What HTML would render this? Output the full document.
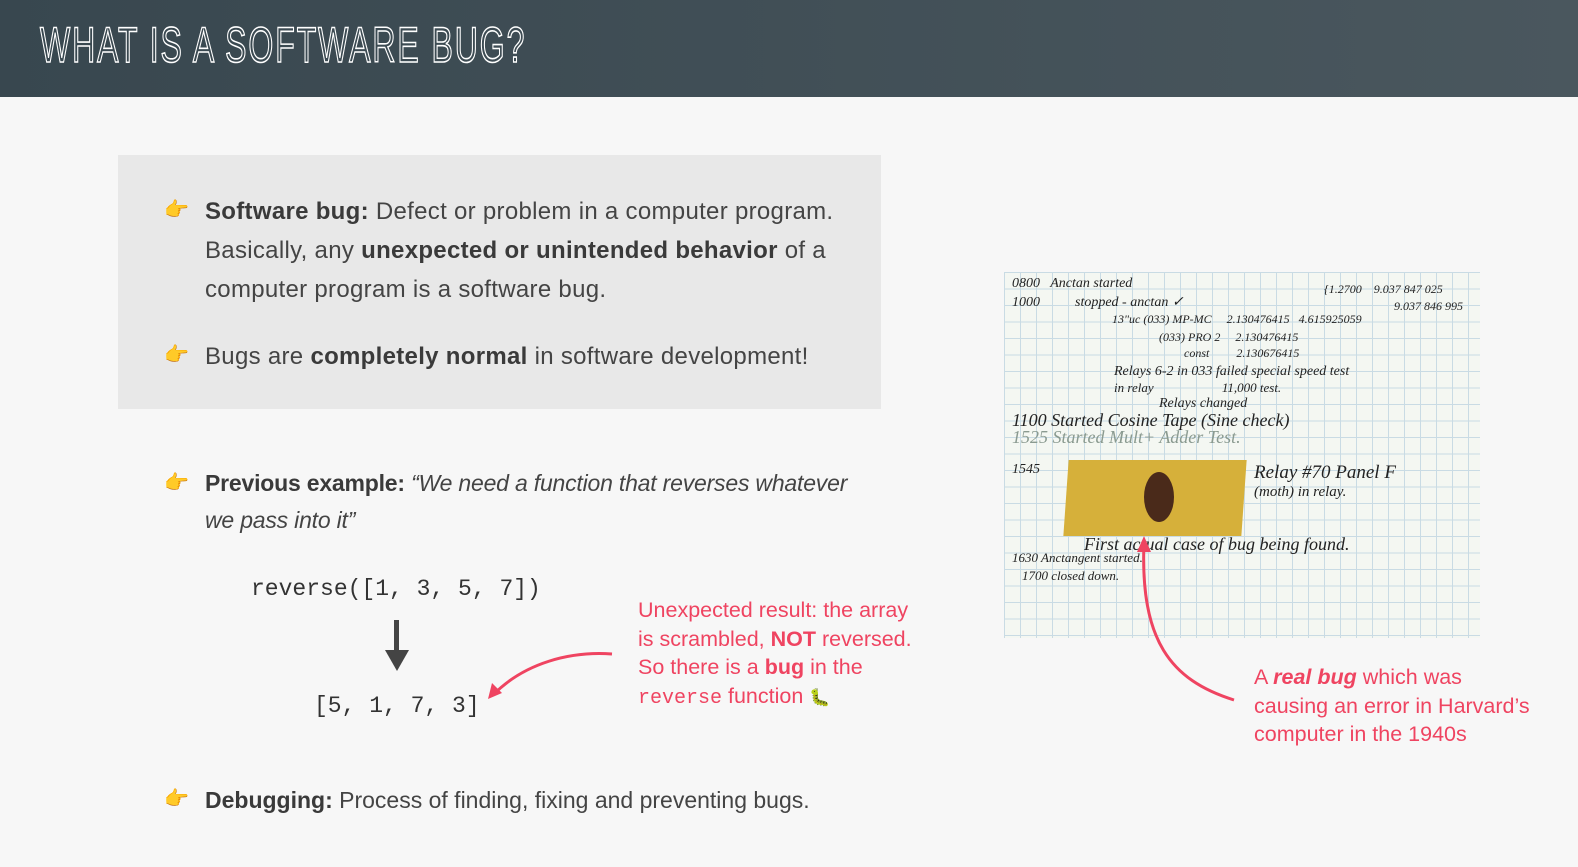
<!DOCTYPE html>
<html><head><meta charset="utf-8"><style>
*{margin:0;padding:0;box-sizing:border-box}
body{width:1578px;height:867px;background:#f7f7f7;position:relative;overflow:hidden;font-family:"Liberation Sans",sans-serif;color:#444}
.hdr{position:absolute;left:0;top:0;width:1578px;height:97px;background:linear-gradient(90deg,#38474f,#4a575e)}
.hdr h1{position:absolute;left:40px;top:16px;font-family:"Liberation Sans Narrow","Liberation Sans",sans-serif;font-weight:400;font-size:50px;letter-spacing:3px;color:transparent;-webkit-text-stroke:1.6px #fff;transform:scaleX(.64);transform-origin:left;white-space:nowrap}
.box{position:absolute;left:118px;top:155px;width:763px;height:254px;background:#e8e8e8}
.p{position:absolute;font-size:24px;letter-spacing:0.3px;line-height:39px;color:#444}
.p b{color:#3a3a3a}
.hand{position:absolute;font-size:20px;font-family:"Noto Color Emoji","DejaVu Sans",sans-serif}
.code{position:absolute;font-family:"Liberation Mono",monospace;font-size:23px;color:#333}
.red{position:absolute;color:#ef4461;font-size:21.5px;line-height:28.5px;white-space:nowrap}
.red code{font-family:"Liberation Mono",monospace;font-size:20px}
.photo{position:absolute;left:1004px;top:272px;width:476px;height:366px;background-color:#f4f7f2;background-image:linear-gradient(#c9dbe4 1px,transparent 1px),linear-gradient(90deg,#c9dbe4 1px,transparent 1px);background-size:16px 16.5px;overflow:hidden}
.hw{position:absolute;font-family:"Liberation Serif",serif;font-style:italic;color:#222;white-space:nowrap}
</style></head><body>
<div class="hdr"><h1>WHAT IS A SOFTWARE BUG?</h1></div>
<div class="box"></div>
<div class="hand" style="left:164px;top:197px">👉</div>
<div class="p" style="left:205px;top:192px;white-space:nowrap"><b>Software bug:</b> Defect or problem in a computer program.<br>Basically, any <b>unexpected or unintended behavior</b> of a<br>computer program is a software bug.</div>
<div class="hand" style="left:164px;top:342px">👉</div>
<div class="p" style="left:205px;top:337px;white-space:nowrap">Bugs are <b>completely normal</b> in software development!</div>
<div class="hand" style="left:164px;top:470px">👉</div>
<div class="p" style="left:205px;top:465px;white-space:nowrap;line-height:37px;font-size:23px;letter-spacing:-0.2px"><b>Previous example:</b> <i>“We need a function that reverses whatever<br>we pass into it”</i></div>
<div class="code" style="left:251px;top:576px">reverse([1, 3, 5, 7])</div>
<svg style="position:absolute;left:383px;top:620px" width="28" height="52"><rect x="11" y="0" width="5" height="32" fill="#444"/><path d="M2 30 L26 30 L14 51 Z" fill="#444"/></svg>
<div class="code" style="left:314px;top:693px">[5, 1, 7, 3]</div>
<svg style="position:absolute;left:480px;top:645px" width="140" height="60"><path d="M132 9 C90 6 45 18 14 49" fill="none" stroke="#ef4461" stroke-width="3"/><path d="M8 54 L12 38 L22 48 Z" fill="#ef4461"/></svg>
<div class="red" style="left:638px;top:596px">Unexpected result: the array<br>is scrambled, <b>NOT</b> reversed.<br>So there is a <b>bug</b> in the<br><code>reverse</code> function <span style="font-family:'Noto Color Emoji',sans-serif;font-size:17px">🐛</span></div>
<div class="photo">
<div class="hw" style="left:8px;top:4px;font-size:14px">0800 &nbsp; Anctan started</div>
<div class="hw" style="left:8px;top:22px;font-size:14px">1000 &nbsp;&nbsp;&nbsp;&nbsp;&nbsp;&nbsp;&nbsp;&nbsp; stopped - anctan ✓</div>
<div class="hw" style="left:320px;top:10px;font-size:12px">{1.2700 &nbsp;&nbsp; 9.037 847 025</div>
<div class="hw" style="left:390px;top:27px;font-size:12px">9.037 846 995</div>
<div class="hw" style="left:108px;top:40px;font-size:12px">13"uc (033) MP-MC &nbsp;&nbsp;&nbsp; 2.130476415 &nbsp; 4.615925059</div>
<div class="hw" style="left:155px;top:58px;font-size:12px">(033) PRO 2 &nbsp;&nbsp;&nbsp; 2.130476415</div>
<div class="hw" style="left:180px;top:74px;font-size:12px">const &nbsp;&nbsp;&nbsp;&nbsp;&nbsp;&nbsp;&nbsp; 2.130676415</div>
<div class="hw" style="left:110px;top:92px;font-size:14px">Relays 6-2 in 033 failed special speed test</div>
<div class="hw" style="left:110px;top:108px;font-size:13px">in relay &nbsp;&nbsp;&nbsp;&nbsp;&nbsp;&nbsp;&nbsp;&nbsp;&nbsp;&nbsp;&nbsp;&nbsp;&nbsp;&nbsp;&nbsp;&nbsp;&nbsp;&nbsp;&nbsp; 11,000 test.</div>
<div class="hw" style="left:155px;top:124px;font-size:14px">Relays changed</div>
<div class="hw" style="left:8px;top:138px;font-size:18px">1100 Started Cosine Tape (Sine check)</div>
<div class="hw" style="left:8px;top:155px;font-size:18px;color:#8a9a90">1525 Started Mult+ Adder Test.</div>
<div class="hw" style="left:8px;top:190px;font-size:14px">1545</div>
<div style="position:absolute;left:62px;top:188px;width:178px;height:76px;background:#d6b03a;transform:skewX(-4deg)"></div>
<div style="position:absolute;left:140px;top:200px;width:30px;height:50px;background:#4a2a1a;border-radius:50%"></div>
<div class="hw" style="left:250px;top:190px;font-size:19px">Relay #70 Panel F</div>
<div class="hw" style="left:250px;top:212px;font-size:15px">(moth) in relay.</div>
<div class="hw" style="left:80px;top:262px;font-size:18px">First actual case of bug being found.</div>
<div class="hw" style="left:8px;top:278px;font-size:13px">1630 Anctangent started.</div>
<div class="hw" style="left:18px;top:296px;font-size:13px">1700 closed down.</div>
</div>
<svg style="position:absolute;left:1130px;top:530px" width="110" height="180"><path d="M104 170 C40 150 10 110 14 12" fill="none" stroke="#ef4461" stroke-width="3"/><path d="M14 6 L7 22 L21 22 Z" fill="#ef4461"/></svg>
<div class="red" style="left:1254px;top:663px">A <b><i>real bug</i></b> which was<br>causing an error in Harvard’s<br>computer in the 1940s</div>
<div class="hand" style="left:164px;top:786px">👉</div>
<div class="p" style="left:205px;top:781px;white-space:nowrap;font-size:23px;letter-spacing:0"><b>Debugging:</b> Process of finding, fixing and preventing bugs.</div>
</body></html>
